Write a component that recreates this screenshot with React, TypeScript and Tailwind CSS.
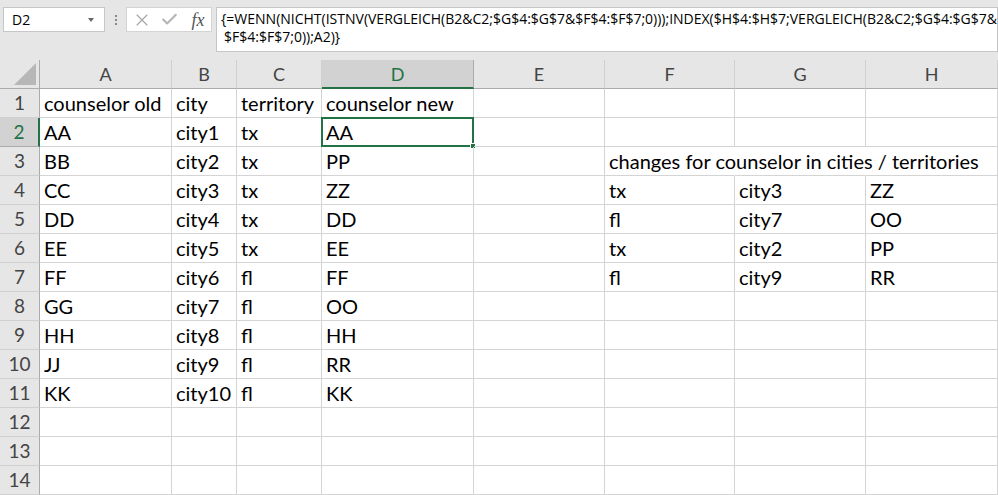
import React from 'react';
import { X, Check } from 'lucide-react';

const columns = ['A', 'B', 'C', 'D', 'E', 'F', 'G', 'H'];

const rows: string[][] = [
  ['counselor old', 'city', 'territory', 'counselor new', '', '', '', ''],
  ['AA', 'city1', 'tx', 'AA', '', '', '', ''],
  ['BB', 'city2', 'tx', 'PP', '', 'changes for counselor in cities / territories', '', ''],
  ['CC', 'city3', 'tx', 'ZZ', '', 'tx', 'city3', 'ZZ'],
  ['DD', 'city4', 'tx', 'DD', '', 'fl', 'city7', 'OO'],
  ['EE', 'city5', 'tx', 'EE', '', 'tx', 'city2', 'PP'],
  ['FF', 'city6', 'fl', 'FF', '', 'fl', 'city9', 'RR'],
  ['GG', 'city7', 'fl', 'OO', '', '', '', ''],
  ['HH', 'city8', 'fl', 'HH', '', '', '', ''],
  ['JJ', 'city9', 'fl', 'RR', '', '', '', ''],
  ['KK', 'city10', 'fl', 'KK', '', '', '', ''],
  ['', '', '', '', '', '', '', ''],
  ['', '', '', '', '', '', '', ''],
  ['', '', '', '', '', '', '', ''],
];

const FormulaBar = () => (
  <div className="flex h-[60px] items-start gap-0 bg-[#e6e6e6] pt-[7px] font-['Open_Sans',sans-serif]">
    <div className="ml-[3px] flex h-[25px] w-[102px] items-center justify-between border border-[#c6c6c6] bg-white pl-[8px] pr-[10px] text-[14px] text-black">
      <span>D2</span>
      <span className="h-0 w-0 border-x-[3px] border-t-[4px] border-x-transparent border-t-[#666]" />
    </div>
    <div className="flex h-[25px] w-[22px] flex-col items-center justify-center gap-[2px]">
      <span className="h-[2px] w-[2px] bg-[#888]" />
      <span className="h-[2px] w-[2px] bg-[#888]" />
      <span className="h-[2px] w-[2px] bg-[#888]" />
    </div>
    <div className="flex h-[25px] w-[86px] items-center border border-[#d4d4d4] bg-white pl-[5px]">
      <X className="h-[20px] w-[20px] text-[#a6a6a6]" strokeWidth={1.4} />
      <Check className="ml-[8px] h-[19px] w-[19px] text-[#b4b4b4]" strokeWidth={2.6} />
      <span className="ml-[12px] font-['Liberation_Serif',serif] text-[18px] italic leading-none text-[#555]">fx</span>
    </div>
    <div className="ml-[4px] flex h-[45px] flex-1 flex-col border border-[#c6c6c6] bg-white pl-[4px] pt-[2px] text-[14px] leading-[18px] text-black">
      <div className="whitespace-nowrap">{'{=WENN(NICHT(ISTNV(VERGLEICH(B2&C2;$G$4:$G$7&$F$4:$F$7;0)));INDEX($H$4:$H$7;VERGLEICH(B2&C2;$G$4:$G$7&'}</div>
      <div className="whitespace-nowrap pl-[3px]">{'$F$4:$F$7;0));A2)}'}</div>
    </div>
  </div>
);

export default function App() {
  return (
    <div className="h-[495px] w-[998px] overflow-hidden bg-white">
      <FormulaBar />
      <div className="grid grid-cols-[40px_132px_65px_85px_152px_131px_130px_131px_132px] font-['Lato',sans-serif]">
        {/* corner */}
        <div className="relative h-[29px] border-b border-r border-[#ababab] bg-[#e6e6e6]">
          <svg className="absolute bottom-[3px] right-[3px]" width="22" height="22" viewBox="0 0 22 22">
            <polygon points="22,0 22,22 0,22" fill="#b7b7b7" />
          </svg>
        </div>
        {columns.map((c) => {
          const sel = c === 'D';
          return (
            <div
              key={c}
              className={
                sel
                  ? 'flex h-[29px] items-center justify-center border-b-2 border-r border-b-[#217346] border-r-[#ababab] bg-[#d2d2d2] pt-[2px] text-[18px] text-[#217346]'
                  : 'flex h-[29px] items-center justify-center border-b border-r border-b-[#ababab] border-r-[#d0d0d0] bg-[#e6e6e6] pt-[1px] text-[18px] text-[#444]'
              }
            >
              {c}
            </div>
          );
        })}
        {rows.map((r, ri) => {
          const rowNum = ri + 1;
          const selRow = rowNum === 2;
          return (
            <React.Fragment key={rowNum}>
              <div
                className={
                  selRow
                    ? 'flex h-[29px] items-center justify-center border-b border-r-2 border-b-[#ababab] border-r-[#217346] bg-[#d2d2d2] text-[19px] text-[#217346]'
                    : 'flex h-[29px] items-center justify-center border-b border-r border-b-[#d0d0d0] border-r-[#ababab] bg-[#e6e6e6] text-[19px] text-[#444]'
                }
              >
                {rowNum}
              </div>
              {r.map((v, ci) => {
                const hideRight = rowNum === 3 && (ci === 5 || ci === 6);
                const selected = rowNum === 2 && ci === 3;
                return (
                  <div
                    key={ci}
                    className={
                      'relative flex h-[29px] items-end whitespace-nowrap border-b border-b-[#d4d4d4] pb-[1px] pl-[4px] text-[20px] leading-[25px] text-black ' +
                      (hideRight ? 'border-r border-r-transparent' : 'border-r border-r-[#d4d4d4]')
                    }
                  >
                    <span className="relative z-10">{v}</span>
                    {selected && (
                      <div className="absolute -left-[1px] -top-[1px] bottom-[-1px] right-[-1px] border-2 border-[#217346]">
                        <span className="absolute -bottom-[4px] -right-[4px] h-[6px] w-[6px] border border-white bg-[#217346]" />
                      </div>
                    )}
                  </div>
                );
              })}
            </React.Fragment>
          );
        })}
      </div>
    </div>
  );
}
